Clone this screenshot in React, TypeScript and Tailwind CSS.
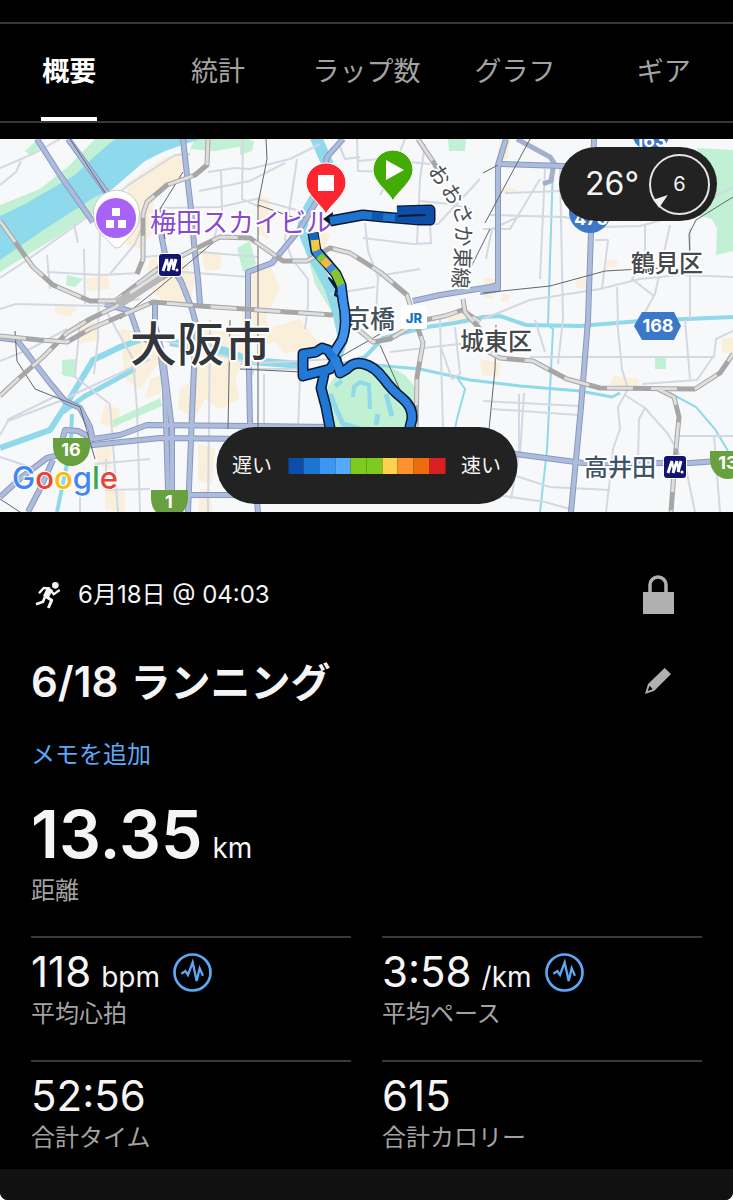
import { useState } from 'react';

const TABS = ['概要', '統計', 'ラップ数', 'グラフ', 'ギア'];

const PACE_COLORS = [
  'bg-[#0a4ea8]',
  'bg-[#1976d2]',
  'bg-[#3a97f3]',
  'bg-[#55a9ff]',
  'bg-[#7ecb20]',
  'bg-[#7ecb20]',
  'bg-[#ffd24d]',
  'bg-[#ff922d]',
  'bg-[#ee6a0f]',
  'bg-[#d8201f]',
];

const STATS = [
  { value: '118', unit: 'bpm', label: '平均心拍', pulse: true },
  { value: '3:58', unit: '/km', label: '平均ペース', pulse: true },
  { value: '52:56', label: '合計タイム' },
  { value: '615', label: '合計カロリー' },
];

// 一般道
const MINOR_ROADS = [
  'M0 29L35 14L60 0',
  'M0 46L16 33L21 22',
  'M0 139L30 119L75 87L130 45L175 16L190 15',
  'M208 33L235 29L250 30L290 20L320 5',
  'M100 88L98 200L94 235',
  'M74 85L78 104',
  'M0 170L16 165L100 167L140 160',
  'M47 116L50 150',
  'M84 110L85 165',
  'M47 133L100 136L140 134',
  'M110 135L135 105L143 85',
  'M160 69L220 68L260 59',
  'M221 32L222 70L214 100',
  'M199 52L250 42L285 24',
  'M243 0L242 60L260 68',
  'M256 60L300 72',
  'M297 20L285 100L292 120L308 140L308 166L305 190',
  'M144 118L200 113L258 118',
  'M170 132L250 138',
  'M340 8L345 20L360 18',
  'M357 0L358 32L392 33L405 0',
  'M357 22L380 20L430 25',
  'M425 5L420 40L417 105',
  'M430 85L431 105',
  'M363 99L413 105L432 104',
  'M365 84L368 112L378 138L376 175',
  'M330 155L375 148',
  'M378 137L420 130',
  'M420 62L450 65L470 70',
  'M380 56L395 30',
  'M432 85L438 85L480 40',
  'M505 54L560 52L640 58',
  'M490 76L565 78L600 88L640 87L680 76L733 48',
  'M483 90L510 90L540 40',
  'M560 29L563 180L558 225',
  'M545 30L540 140',
  'M486 120L492 90L520 77',
  'M483 180L530 161L600 150L640 140L680 136L733 138',
  'M595 101L608 101L602 150',
  'M645 85L645 120L632 140L654 157',
  'M670 86L655 155L645 173',
  'M617 148L618 183',
  'M690 90L690 180',
  'M483 262L579 267',
  'M492 270L578 276',
  'M524 254L520 315',
  'M535 181L545 213',
  'M530 218L582 218L714 218L716 200L733 192',
  'M617 181L622 230L628 250L618 268L620 290L613 310L610 340L606 373',
  'M625 256L645 269L668 295L685 325L695 373',
  'M645 269L639 280L638 320',
  'M685 181L690 240',
  'M642 245L697 241L715 215',
  'M674 297L733 297',
  'M714 297L720 373',
  'M519 255L519 315L511 360',
  'M516 337L550 348L610 351',
  'M490 355L545 363L570 370',
  'M440 206L452 240L460 235L455 188',
  'M390 213L450 206L483 203',
  'M440 180L443 290',
  'M80 182L75 238L110 265L118 373',
  'M105 170L133 220L137 270L140 373',
  'M7 281L60 255',
  'M0 296L8 282L60 262L150 220',
  'M0 222L30 210L67 190',
  'M95 325L150 320',
  'M106 320L106 351L150 350',
  'M0 318L30 328',
  'M140 195L250 224',
  'M210 181L208 373',
  'M240 225L335 220',
  'M253 236L253 230L330 230',
  'M264 235L264 290',
  'M300 238L298 290',
  'M80 350L80 373',
];

// 主要道路
const HIGHWAYS = [
  'M37 0L60 36L93 83',
  'M68 0L110 58L118 72',
  'M183 0L187 36L191 70L194 105L198 140L200 165',
  'M160 90L166 120L181 142L192 170L196 185',
  'M105 165L130 172L138 195L160 210L165 250L168 351',
  'M155 164L155 186L163 218L172 290L172 351',
  'M196 183L194 228L188 373',
  'M0 199L17 201L33 222L50 244L65 262L80 269L90 288L93 301',
  'M60 310L65 291L78 292L93 300L120 296L147 286L250 287L330 288',
  'M60 311L93 306L160 299L250 300L330 301',
  'M0 358L22 338L47 319L67 314',
  'M28 373L40 350L53 321',
  'M187 356L250 356',
  'M343 0L327 18L318 60L300 90L272 124L248 133L248 183L250 285L258 373',
  'M413 162L440 156L490 148L498 146',
  'M506 0L498 26L498 150L480 153',
  'M498 25L563 27L595 30',
  'M594 0L591 93L588 181L581 268L571 373',
  'M500 313L583 324L690 324L733 321',
];

const RAILWAYS = [
  'M0 82L33 128L53 146L90 162L115 162L135 147L160 128L195 110L220 98L250 99L283 122L307 122L330 109L350 114L380 133L407 156L415 181L423 204L417 238L416 290',
  'M208 0L207 26L195 36L167 46L147 63L143 75L143 120L137 135',
  'M0 257L17 241L43 218L67 194L90 180L115 168L145 149L180 128',
  'M0 197L40 201L67 203L90 190L153 163L200 167L333 176',
  'M418 0L434 24L440 35',
  'M355 188L373 203L390 200L420 182L445 177L462 171L480 183',
  'M463 160L465 173L480 190',
  'M483 210L500 219L533 222L567 240L600 249L695 250L720 234L733 215',
  'M658 250L674 258L679 278L675 320L671 373',
];

const THIN_RAILS = [
  'M15 192L17 222L35 250L80 268L95 320',
  'M183 33L160 70L165 100',
  'M266 0L267 20L258 65L258 290',
  'M120 180L160 148L220 98',
  'M258 66L298 80',
  'M530 0L485 84',
  'M483 34L498 26',
  'M483 154L550 147L605 132L660 129',
  'M733 58L696 81L689 95L690 120',
  'M380 206L404 260',
  'M230 181L228 290',
  'M70 0L108 58',
  'M340 218L380 195',
  'M490 90L470 130L462 140',
  'M0 360L20 373',
  'M240 230L302 233',
  'M496 186L495 230L488 300',
];

const CREAM_AREAS = [
  'M125 45L165 18L190 14L180 40L155 60L150 75L135 70Z',
  'M128 55L150 62L158 85L140 110L110 100L118 80Z',
  'M150 120L180 115L195 140L190 165L160 160L145 145Z',
  'M86 140L108 136L110 150L88 152Z',
  'M55 165L78 168L70 178L55 174Z',
  'M200 110L222 115L220 130L205 132Z',
  'M120 190L160 195L162 220L140 250L125 240Z',
  'M150 240L165 235L160 255L145 260Z',
  'M200 190L240 195L245 220L235 240L240 260L220 270L205 260L195 280L178 270L180 250L195 240Z',
  'M198 305L215 310L212 345L198 342Z',
  'M75 185L95 183L100 200L80 205Z',
  'M105 265L120 270L118 290L100 285Z',
  'M95 305L112 308L110 330L98 325Z',
  'M105 350L125 353L125 373L105 370Z',
  'M250 130L270 125L280 150L265 180L280 200L260 210L240 195Z',
  'M265 190L300 180L320 205L285 215Z',
  'M258 55L270 60L268 100L258 95Z',
  'M310 88L330 95L325 110L312 105Z',
  'M445 173L470 170L472 185L450 186Z',
  'M500 0L510 0L508 20L497 22Z',
  'M498 48L516 50L515 54L498 54Z',
  'M484 138L495 140L493 160L484 158Z',
  'M502 155L510 155L508 162L500 162Z',
  'M607 120L618 122L616 128L606 128Z',
  'M577 138L586 140L585 150L575 148Z',
  'M613 237L640 240L638 247L610 246Z',
  'M480 220L500 224L498 238L482 236Z',
  'M722 200L733 198L733 214L722 214Z',
  'M200 350L210 350L212 373L198 373Z',
];

const GREEN_AREAS = [
  'M0 66L40 50L70 26L95 0L118 0L75 38L25 66L0 80Z',
  'M0 118L45 88L100 55L110 60L60 96L0 133Z',
  'M195 0L250 0L250 6L215 12L190 10Z',
  'M25 12L38 0L40 12L30 16Z',
  'M697 9L733 11L733 112L716 116L717 90L712 80L700 77Z',
  'M655 218H666V230H655Z',
  'M62 221L76 220L76 239L62 236Z',
  'M113 281L160 259L162 267L113 288Z',
  'M67 136L83 140L75 148L66 146Z',
  'M237 109L250 102L256 125L243 133Z',
  'M240 0L254 2L252 12L240 16Z',
  'M448 0L466 0L465 12L449 12Z',
  'M300 90L308 100L338 160L330 170L315 145Z',
  'M340 231L355 224L385 225L405 236L415 248L413 290L333 290L326 250Z',
];

const WATERWAYS = [
  { d: 'M314 -6L328 26', width: 12 },
  { d: 'M316 56L305 75L302 90L313 118L330 150L338 176L343 200L336 222', width: 10 },
  { d: 'M0 309L50 291L63 271L93 221L120 208L140 201', width: 6 },
  { d: 'M63 273L85 257L135 230', width: 5 },
  { d: 'M72 275L71 300L66 330L57 373', width: 4 },
  { d: 'M170 203L225 212L250 222L302 226', width: 8 },
  { d: 'M340 226L365 218L383 199L427 188L455 184L483 178L500 177L526 186L580 187L640 182L733 178', width: 4 },
  { d: 'M373 226L420 230L470 241L520 247L580 252L612 258L620 254', width: 3 },
  { d: 'M670 254L696 268L715 290L728 312', width: 2 },
  { d: 'M553 26L548 186L553 190L547 311L540 373', width: 2 },
  { d: 'M458 240L465 250L457 280L455 290', width: 2 },
  { d: 'M353 258L354 248L360 243L369 246L370 270', width: 4 },
  { d: 'M330 255L337 272L343 285L360 290', width: 5 },
  { d: 'M386 255L392 277', width: 5 },
  { d: 'M378 275L376 286', width: 5 },
  { d: 'M335 247L342 242', width: 4 },
];

const START_LEG = 'M397 72L430 71L430 81L420 81L383 78L363 76L330 82';
const RIVER_LEG = 'M313 94L316 112L326 123L336 135L341 146L343 162Q348 185 342 201L332 217';
const BRIDGE_LOOP = 'M332 217L328 211L322 209L316 213L303 215L303 237L330 230L336 221Z';
const CASTLE_LOOP =
  'M334 219L338 226L340 234L347 230Q354 222 364 225Q374 227 384 240Q392 251 402 259Q413 268 412 280L408 296';
const SOUTH_LEG = 'M325 230L323 240L321 249L326 268L331 294';

const ROUTE = [START_LEG, RIVER_LEG, BRIDGE_LOOP, CASTLE_LOOP, SOUTH_LEG];

const ROUTE_SEGMENTS = [
  { d: START_LEG, color: '#1d74cf' },
  { d: 'M397 72L430 71L430 81L420 81L395 79', color: '#0d4ea6' },
  { d: 'M383 78L372 77', color: '#0d58b0' },
  { d: RIVER_LEG, color: '#3f92ee' },
  { d: 'M313 94L315 101', color: '#1464bd' },
  { d: 'M315 101L316 112', color: '#f5c93c' },
  { d: 'M316 112L319 117', color: '#2f86dd' },
  { d: 'M319 117L323 121', color: '#8bc82c' },
  { d: 'M323 121L329 127', color: '#f5b93c' },
  { d: 'M329 127L333 132', color: '#3f8fdc' },
  { d: 'M333 132L336 135L341 146', color: '#86c52b' },
  { d: BRIDGE_LOOP, color: '#2079d6' },
  { d: SOUTH_LEG, color: '#1f76d3' },
  { d: CASTLE_LOOP, color: '#2b80de' },
];

const LINE_LABEL = [
  { char: 'お', x: 440, y: 36, angle: 58 },
  { char: 'お', x: 453, y: 55, angle: 60 },
  { char: 'さ', x: 463, y: 75, angle: 70 },
  { char: 'か', x: 464, y: 97, angle: 86 },
  { char: '東', x: 463, y: 119, angle: 92 },
  { char: '線', x: 461, y: 139, angle: 94 },
];

const PIN_PATH = 'M0 31C-4 22-20 12-20 0A20 20 0 1 1 20 0C20 12 4 22 0 31Z';

function MetroMark({ x, y }: { x: number; y: number }) {
  return (
    <g transform={`translate(${x} ${y})`}>
      <rect x="-1" y="-1" width="24" height="24" rx="4" fill="#fff" />
      <rect width="22" height="22" rx="3" fill="#13146f" />
      <path d="M4 17L8 5M9 17L13 5M14 16L17 5" stroke="#fff" strokeWidth="3" />
      <path d="M8 5L10 16M13 5L15 16" stroke="#fff" strokeWidth="2" />
      <circle cx="18" cy="16" r="1.5" fill="#fff" />
    </g>
  );
}

function RouteMap() {
  return (
    <svg
      viewBox="0 0 733 373"
      className="block h-auto w-full bg-[#f7f8f9] font-['Inter','Noto_Sans_CJK_JP',sans-serif]"
      role="img"
      aria-label="大阪市"
      fill="none"
    >
      {/* 地形 */}
      {CREAM_AREAS.map((d) => (
        <path key={d} d={d} fill="#faefda" />
      ))}
      {GREEN_AREAS.map((d) => (
        <path key={d} d={d} fill="#c2f0d4" />
      ))}
      <path
        d="M0 77L25 65L75 36L95 17L115 0L200 0L165 12L145 22L110 52L95 58L45 90L0 121Z"
        fill="#8fd9ec"
      />
      {WATERWAYS.map((w) => (
        <path key={w.d} d={w.d} stroke="#8fd9ea" strokeWidth={w.width} />
      ))}

      {/* 道路と線路 */}
      <g stroke="#d3d8e2" strokeWidth="2" strokeLinejoin="round">
        {MINOR_ROADS.map((d) => (
          <path key={d} d={d} />
        ))}
      </g>
      <g strokeLinejoin="round">
        <path d="M517 0L550 18L554 24L551 42L543 45" stroke="#a4b0cb" strokeWidth="5" />
        {HIGHWAYS.map((d) => (
          <path key={d} d={d} stroke="#8799c2" strokeWidth="6" />
        ))}
        {HIGHWAYS.map((d) => (
          <path key={d} d={d} stroke="#aebcdc" strokeWidth="4" />
        ))}
      </g>
      <g stroke="#63666b" strokeWidth="1">
        {THIN_RAILS.map((d) => (
          <path key={d} d={d} />
        ))}
      </g>
      <g strokeLinejoin="round">
        {RAILWAYS.map((d) => (
          <path key={d} d={d} stroke="#a6a6a6" strokeWidth="5" />
        ))}
        {RAILWAYS.map((d) => (
          <path key={d} d={d} stroke="#dedede" strokeWidth="3" strokeDasharray="26 18" />
        ))}
        <path d="M118 165L160 137" stroke="#b8b8b8" strokeWidth="10" />
        <path d="M130 154L160 134" stroke="#e2e2e2" strokeWidth="3" />
      </g>

      {/* 路線番号 */}
      <g fill="#3c78c8">
        <circle cx="651" cy="-7" r="19" />
        <circle cx="590" cy="73" r="21" />
        <path d="M642 173H674L681 187L674 201H642L634 187Z" />
      </g>
      <g fill="#68a03f">
        <path d="M53 299H90V307C90 319 81 327 71 327C61 327 53 319 53 307Z" />
        <path d="M151 351H188V359C188 371 179 379 169 379C159 379 151 371 151 359Z" />
        <path d="M710 312H747V320C747 332 738 340 728 340C718 340 710 332 710 320Z" />
      </g>
      <g fill="#fff" fontWeight="700" fontSize="18" textAnchor="middle">
        <text x="651" y="8">163</text>
        <text x="591" y="86">475</text>
        <text x="658" y="193">168</text>
        <text x="71" y="317">16</text>
        <text x="169" y="369">1</text>
        <text x="728" y="330">13</text>
      </g>

      {/* 地名 */}
      <g stroke="#fff" strokeWidth="4" strokeLinejoin="round" style={{ paintOrder: 'stroke' }}>
        <text x="150" y="93" fontSize="26" fill="#8748d2">梅田スカイビル</text>
        <text x="130" y="222" fontSize="47" fontWeight="500" fill="#33363a">大阪市</text>
        <text x="345" y="189" fontSize="25" fontWeight="500" fill="#43525f">京橋</text>
        <text x="460" y="211" fontSize="24" fontWeight="500" fill="#45484c">城東区</text>
        <text x="631" y="133" fontSize="24" fontWeight="500" fill="#45484c">鶴見区</text>
        <text x="584" y="337" fontSize="24" fontWeight="500" fill="#3d5468">高井田</text>
        {LINE_LABEL.map((item) => (
          <text
            key={item.y}
            transform={`translate(${item.x} ${item.y}) rotate(${item.angle})`}
            y="8"
            fontSize="21"
            textAnchor="middle"
            fill="#4c4f53"
          >
            {item.char}
          </text>
        ))}
      </g>
      <rect x="401" y="166" width="26" height="24" rx="3" fill="#fff" />
      <text x="414" y="184" fontSize="13" fontWeight="800" textAnchor="middle" fill="#1873b8">JR</text>
      <MetroMark x={159} y={115} />
      <MetroMark x={664} y={317} />

      {/* ランニングルート */}
      <g strokeLinejoin="round">
        {ROUTE.map((d) => (
          <path key={d} d={d} stroke="#0a1a33" strokeWidth="11" />
        ))}
        <path d="M329 139L337 147L335 156L343 160Z" fill="#1b4f8f" stroke="#0a1a33" strokeWidth="2" />
        <path d="M323 80L333 73L332 87Z" fill="#0a1a33" />
        {ROUTE_SEGMENTS.map((s) => (
          <path key={s.d} d={s.d} stroke={s.color} strokeWidth="8" />
        ))}
        <path d="M398 77L424 76" stroke="#0a1a33" strokeWidth="2" />
      </g>

      {/* ピン */}
      <path
        d="M94 79A23 23 0 1 1 139 79C139 92 127 99 121 107Q117 111 113 107C107 99 94 92 94 79Z"
        fill="#fff"
        stroke="#c9c9c9"
        strokeWidth="1"
      />
      <circle cx="116" cy="79" r="20" fill="#a863f6" />
      <path d="M112 69h8v8h-8zM106 81h8v8h-8zM118 81h8v8h-8z" fill="#fff" />
      <g transform="translate(326 44)">
        <path d={PIN_PATH} fill="#fb2630" stroke="#fff" strokeWidth="1" />
        <path d="M-8-8H8V8H-8Z" fill="#fff" />
      </g>
      <g transform="translate(393 31)">
        <path d={PIN_PATH} fill="#43ab05" stroke="#fff" strokeWidth="1" />
        <path d="M-7-10L11 0L-7 10Z" fill="#fff" />
      </g>

      <text
        x="12"
        y="350"
        fontSize="31"
        fontWeight="500"
        stroke="#fff"
        strokeWidth="2"
        style={{ paintOrder: 'stroke' }}
      >
        <tspan fill="#4285f4">G</tspan>
        <tspan fill="#ea4335">o</tspan>
        <tspan fill="#fbbc05">o</tspan>
        <tspan fill="#4285f4">g</tspan>
        <tspan fill="#34a853">l</tspan>
        <tspan fill="#ea4335">e</tspan>
      </text>
    </svg>
  );
}

function RunnerIcon() {
  return (
    <svg viewBox="0 0 78 82" className="h-7 w-[26px]" fill="none" stroke="#f5f5f5" strokeLinejoin="round">
      <circle cx="61" cy="12" r="10" fill="#f5f5f5" stroke="none" />
      <path d="M45 22L32 48" strokeWidth="18" />
      <path d="M46 21L26 20L12 36" strokeWidth="7" />
      <path d="M47 26L56 39L74 26" strokeWidth="7" />
      <path d="M34 46L50 57L40 80" strokeWidth="9" />
      <path d="M30 46L24 61L3 69" strokeWidth="8" />
    </svg>
  );
}

function LockIcon() {
  return (
    <svg viewBox="0 0 31 40" className="h-10 w-[31px]" fill="none">
      <path d="M0 17H31V39H0Z" fill="#b0b0b0" />
      <path d="M7 19V10A8 8 0 0 1 23 10V19" stroke="#b0b0b0" strokeWidth="3.5" />
    </svg>
  );
}

function PencilIcon() {
  return (
    <svg viewBox="0 0 78 78" className="size-[26px]" fill="#b0b0b0">
      <path
        fillRule="evenodd"
        d="M59 0L78 18L28 68L0 78L9 48ZM14 53L8 69L23 64Z"
      />
    </svg>
  );
}

function PulseIcon() {
  return (
    <svg viewBox="0 0 117 117" className="size-[39px]" fill="none" stroke="#5ba8f7">
      <circle cx="58.5" cy="58.5" r="54" strokeWidth="8" />
      <path d="M25 62L37 54L45 66L59 28L71 84L80 46L90 68" strokeWidth="7" />
    </svg>
  );
}

export default function App() {
  const [activeTab, setActiveTab] = useState(TABS[0]);

  return (
    <div className="bg-white font-['Inter','Noto_Sans_CJK_JP',sans-serif]">
      <main className="overflow-hidden rounded-b-lg bg-black pt-[22px] text-[#f5f5f5]" lang="ja">
        {/* タブ */}
        <nav className="mb-4 border-y-2 border-[#383838]">
          <div className="-mx-[5px] grid grid-cols-5">
            {TABS.map((tab) => (
              <button
                key={tab}
                type="button"
                onClick={() => setActiveTab(tab)}
                className={
                  tab === activeTab
                    ? 'flex h-[97px] justify-center whitespace-nowrap text-[27px] font-bold text-white'
                    : 'flex h-[97px] justify-center whitespace-nowrap text-[27px] text-[#a3a3a3]'
                }
              >
                <span
                  className={
                    tab === activeTab
                      ? 'flex h-full items-center border-b-4 border-white px-px pt-1'
                      : 'flex h-full items-center'
                  }
                >
                  {tab}
                </span>
              </button>
            ))}
          </div>
        </nav>

        {/* マップ */}
        <section className="relative">
          <RouteMap />
          <div className="absolute top-2 right-4 flex h-[74px] items-center gap-[10px] rounded-full bg-[#222] pr-[7px] pl-[26px]">
            <span className="text-[32px]">26°</span>
            <div className="relative flex size-[61px] items-center justify-center rounded-full border-2 border-[#e5e5e5] text-xl">
              6
              <svg viewBox="0 0 42 40" className="absolute bottom-[5px] left-[3px] h-[13px] w-[14px]" fill="#f0f0f0">
                <path d="M0 14L42 0L15 40Z" />
              </svg>
            </div>
          </div>
          <div className="absolute bottom-2 left-1/2 flex h-[77px] -translate-x-1/2 items-center gap-4 rounded-full bg-[#222] px-4 text-xl whitespace-nowrap">
            <span>遅い</span>
            <div className="flex h-4 w-[157px]">
              {PACE_COLORS.map((color, i) => (
                <div key={i} className={`flex-1 ${color}`} />
              ))}
            </div>
            <span>速い</span>
          </div>
        </section>

        {/* アクティビティ概要 */}
        <section className="px-[31px] pt-[63px] pb-[15px]">
          <div className="flex h-10 items-center">
            <div className="ml-1 flex items-center gap-[17px]">
              <RunnerIcon />
              <time className="text-2xl">6月18日 @ 04:03</time>
            </div>
            <button type="button" aria-label="プライバシー" className="mr-7 ml-auto flex w-8 justify-center">
              <LockIcon />
            </button>
          </div>

          <div className="mt-[42px] flex h-12 items-center">
            <h1 className="flex items-baseline gap-3 text-[42px] font-semibold">
              6/18 <span className="text-[40px]">ランニング</span>
            </h1>
            <button type="button" aria-label="編集" className="mr-7 ml-auto flex w-8 justify-center">
              <PencilIcon />
            </button>
          </div>

          <button type="button" className="mt-[34px] block text-2xl leading-8 text-[#5ba8f7]">
            メモを追加
          </button>

          <dl className="mt-[31px] flex flex-col-reverse">
            <dt className="pt-[9px] text-2xl leading-8 text-[#a3a3a3]">距離</dt>
            <dd className="flex items-baseline gap-[10px] text-[66px] leading-[64px] font-semibold">
              13.35
              <span className="text-[28px] leading-8 font-normal">km</span>
            </dd>
          </dl>

          <dl className="mt-[29px] grid grid-cols-2 gap-x-[31px] gap-y-[30px]">
            {STATS.map((stat) => (
              <div key={stat.label} className="flex flex-col-reverse border-t-2 border-[#3a3a3a] pt-[10px]">
                <dt className="pt-[2px] text-2xl leading-8 text-[#a3a3a3]">{stat.label}</dt>
                <dd className="flex h-12 items-center gap-[13px]">
                  <span className="flex items-baseline gap-[10px] text-[42px] leading-[48px]">
                    {stat.value}
                    {stat.unit && <span className="text-[28px] leading-8">{stat.unit}</span>}
                  </span>
                  {stat.pulse && <PulseIcon />}
                </dd>
              </div>
            ))}
          </dl>
        </section>

        <div className="h-[31px] bg-[#111]" />
      </main>
    </div>
  );
}
